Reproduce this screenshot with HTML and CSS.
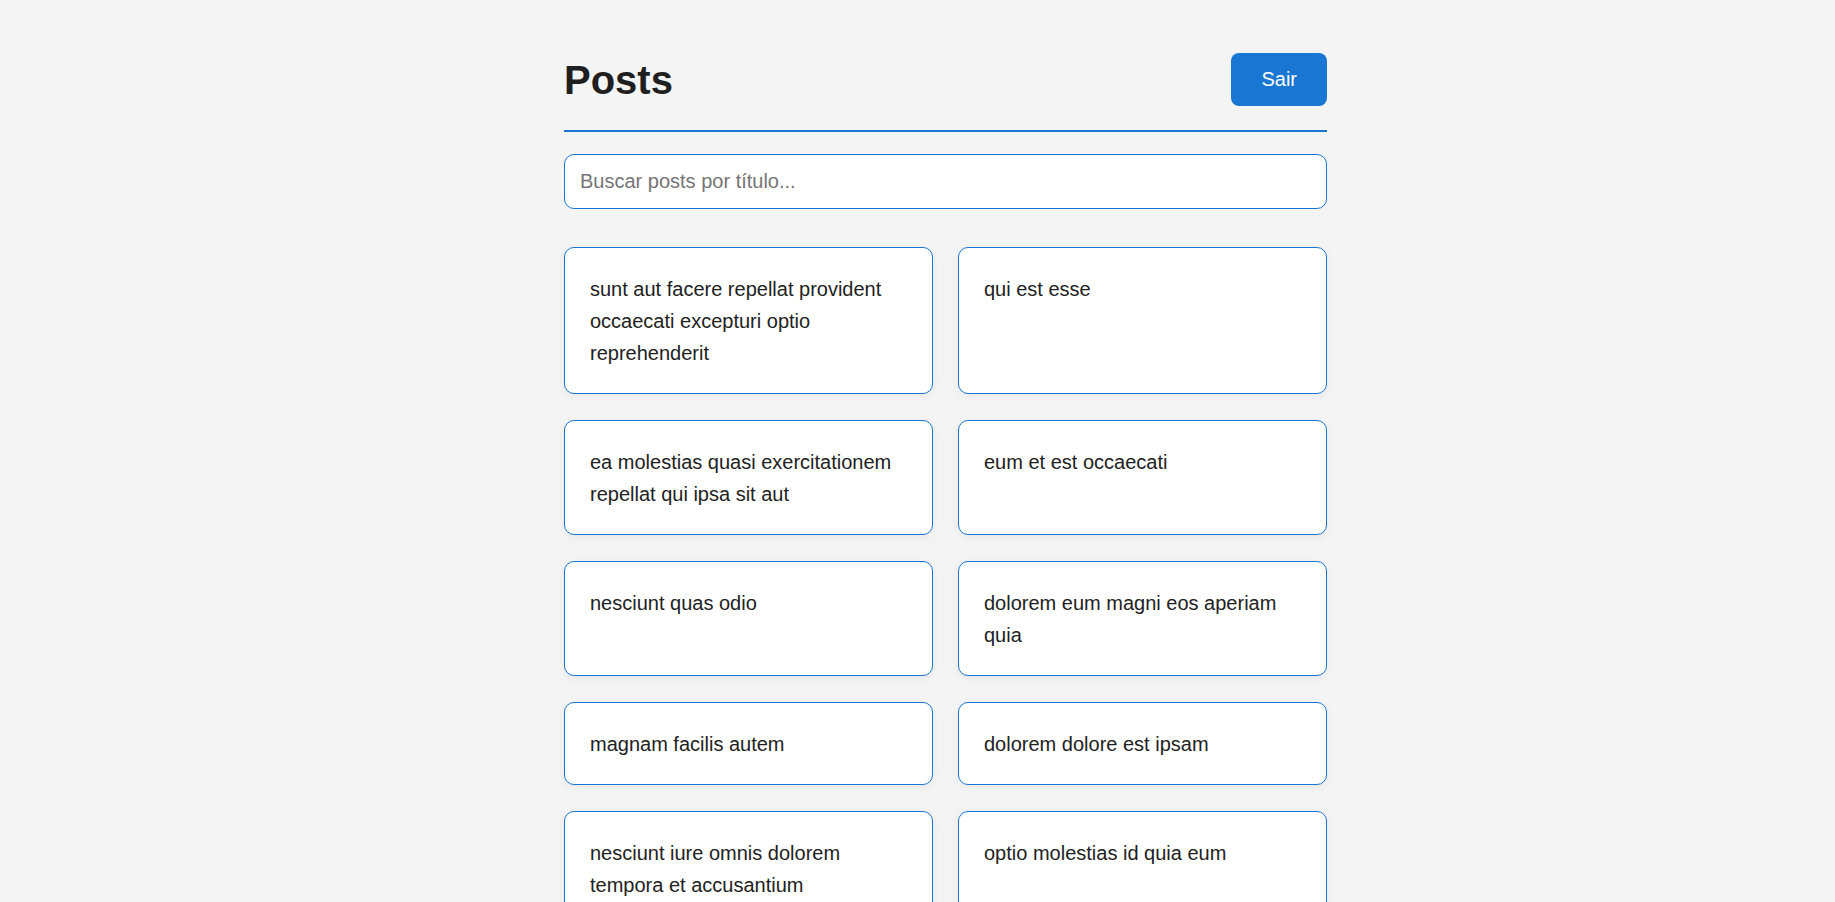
FILE: index.html
```html
<!DOCTYPE html>
<html lang="pt-BR">
<head>
<meta charset="utf-8">
<title>Posts</title>
<link rel="stylesheet" href="styles.css">
</head>
<body>
<div class="page">
  <main class="container">
    <header class="header">
      <h1 class="title">Posts</h1>
      <button class="logout" type="button">Sair</button>
    </header>
    <input class="search" type="text" placeholder="Buscar posts por título...">
    <section class="grid">
      <article class="card"><h3 class="card-title">sunt aut facere repellat provident occaecati excepturi optio reprehenderit</h3></article>
      <article class="card"><h3 class="card-title">qui est esse</h3></article>
      <article class="card"><h3 class="card-title">ea molestias quasi exercitationem repellat qui ipsa sit aut</h3></article>
      <article class="card"><h3 class="card-title">eum et est occaecati</h3></article>
      <article class="card"><h3 class="card-title">nesciunt quas odio</h3></article>
      <article class="card"><h3 class="card-title">dolorem eum magni eos aperiam quia</h3></article>
      <article class="card"><h3 class="card-title">magnam facilis autem</h3></article>
      <article class="card"><h3 class="card-title">dolorem dolore est ipsam</h3></article>
      <article class="card"><h3 class="card-title">nesciunt iure omnis dolorem tempora et accusantium</h3></article>
      <article class="card"><h3 class="card-title">optio molestias id quia eum</h3></article>
      <article class="card"><h3 class="card-title">et ea vero quia laudantium autem</h3></article>
      <article class="card"><h3 class="card-title">in quibusdam tempore odit est dolorem</h3></article>
      <article class="card"><h3 class="card-title">dolorum ut in voluptas mollitia et saepe quo animi</h3></article>
      <article class="card"><h3 class="card-title">voluptatem eligendi optio</h3></article>
    </section>
  </main>
</div>
</body>
</html>
```

FILE: styles.css
```css
* {
  box-sizing: border-box;
}

html, body {
  margin: 0;
  padding: 0;
  background: #f4f4f4;
}

body {
  font-family: "Liberation Sans", Arial, sans-serif;
  color: #222222;
}

.page {
  padding: 53px 0 40px 56px;
}

.container {
  width: 763px;
  margin: 0 auto;
}

.header {
  display: flex;
  align-items: center;
  justify-content: space-between;
  padding-bottom: 24px;
  border-bottom: 2px solid #1976d2;
}

.title {
  margin: 0;
  font-size: 40px;
  font-weight: 700;
  line-height: 46px;
  color: #1f1f1f;
}

.logout {
  height: 53px;
  padding: 0 30px;
  border: none;
  border-radius: 8px;
  background: #1976d2;
  color: #ffffff;
  font-family: "Liberation Sans", Arial, sans-serif;
  font-size: 20px;
  cursor: pointer;
}

.search {
  display: block;
  width: 100%;
  height: 55px;
  margin-top: 22px;
  padding: 0 15px;
  border: 1px solid #1976d2;
  border-radius: 10px;
  background: #ffffff;
  font-family: "Liberation Sans", Arial, sans-serif;
  font-size: 20px;
  color: #222222;
  outline: none;
}

.search::placeholder {
  color: #757575;
}

.grid {
  display: grid;
  grid-template-columns: 1fr 1fr;
  column-gap: 25px;
  row-gap: 26px;
  margin-top: 38px;
}

.card {
  background: #ffffff;
  border: 1px solid #1976d2;
  border-radius: 10px;
  padding: 24.5px 25px;
  box-shadow: 0 2px 8px rgba(0, 0, 0, 0.06);
}

.card-title {
  margin: 0;
  font-size: 20px;
  font-weight: 400;
  line-height: 32px;
  color: #222222;
}
```
